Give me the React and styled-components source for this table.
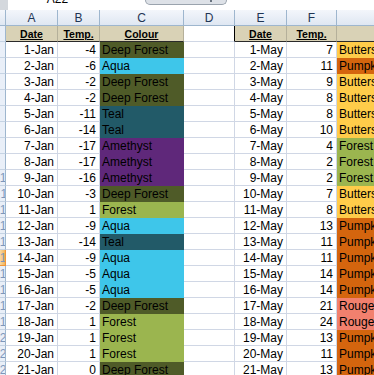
import React from "react";
import styled, { createGlobalStyle } from "styled-components";

const Global = createGlobalStyle`
  html, body { margin: 0; padding: 0; background: #fff; overflow: hidden; }
  body { width: 374px; height: 375px; font-family: "Liberation Sans", Arial, sans-serif; }
`;

const COLORS = {
  "Deep Forest": "#4f5b28",
  Aqua: "#3ec6ea",
  Teal: "#225a68",
  Amethyst: "#5f287a",
  Forest: "#9bb54f",
  Butterscotch: "#ffcc4a",
  Pumpkin: "#d4650e",
  Rouge: "#f2806e",
};

const jan = [
  [-4, "Deep Forest"], [-6, "Aqua"], [-2, "Deep Forest"], [-2, "Deep Forest"],
  [-11, "Teal"], [-14, "Teal"], [-17, "Amethyst"], [-17, "Amethyst"],
  [-16, "Amethyst"], [-3, "Deep Forest"], [1, "Forest"], [-9, "Aqua"],
  [-14, "Teal"], [-9, "Aqua"], [-5, "Aqua"], [-5, "Aqua"], [-2, "Deep Forest"],
  [1, "Forest"], [1, "Forest"], [1, "Forest"], [0, "Deep Forest"],
];
const may = [
  [7, "Butterscotch"], [11, "Pumpkin"], [9, "Butterscotch"], [8, "Butterscotch"],
  [8, "Butterscotch"], [10, "Butterscotch"], [4, "Forest"], [2, "Forest"],
  [2, "Forest"], [7, "Butterscotch"], [8, "Butterscotch"], [13, "Pumpkin"],
  [11, "Pumpkin"], [11, "Pumpkin"], [14, "Pumpkin"], [14, "Pumpkin"],
  [21, "Rouge"], [24, "Rouge"], [13, "Pumpkin"], [11, "Pumpkin"], [13, "Pumpkin"],
];

const Page = styled.div`
  width: 374px;
  height: 375px;
  overflow: hidden;
  display: flex;
  flex-direction: column;
`;

const FormulaStrip = styled.div`
  height: 10px;
  flex: none;
  display: flex;
  align-items: flex-start;
  background: #fff;
  overflow: hidden;
`;

const Corner = styled.div`
  width: 8px;
  height: 10px;
  background: #d4d8dd;
`;

const NameBox = styled.div`
  width: 137px;
  height: 10px;
  display: flex;
  align-items: flex-end;
  justify-content: center;
  overflow: hidden;
  span {
    font-size: 12px;
    line-height: 14px;
    margin-bottom: 4px;
    color: #000;
    padding-right: 38px;
  }
`;

const Expander = styled.div`
  width: 82px;
  height: 5px;
  background: #dde1e7;
  border: 1px solid #9aa3ad;
  border-top: none;
  border-radius: 0 0 9px 9px;
  display: flex;
  justify-content: flex-end;
  align-items: flex-start;
  padding-right: 14px;
  box-sizing: border-box;
  &::after {
    content: "";
    width: 2px;
    height: 2px;
    background: #6a7480;
  }
`;

const Grid = styled.div`
  display: grid;
  grid-template-columns: 6px 52px 42px 84px 51px 52px 50px 116px;
  grid-auto-rows: 16px;
  width: 453px;
`;

const ColHead = styled.div`
  box-sizing: border-box;
  background: linear-gradient(#f3f6fb, #dfe7f2);
  border-right: 1px solid #9eb6ce;
  border-bottom: 1px solid #9eb6ce;
  color: #1f3555;
  font-size: 12px;
  display: flex;
  align-items: center;
  justify-content: center;
  line-height: 1;
`;

const RowHead = styled.div`
  box-sizing: border-box;
  background: ${(p) => (p.$active ? "linear-gradient(90deg,#f9d99f,#f1b45c)" : "#e9eff8")};
  border-right: 1px solid ${(p) => (p.$active ? "#f29536" : "#9eb6ce")};
  border-bottom: 1px solid ${(p) => (p.$active ? "#f29536" : "#c5d3e3")};
  overflow: hidden;
  display: flex;
  justify-content: flex-end;
  align-items: center;
  font-size: 12px;
  color: #7d97bb;
  span { margin-right: -8px; }
`;

const Head = styled.div`
  box-sizing: border-box;
  background: ${(p) => (p.$blank ? "#fff" : "#d9d2b6")};
  border-right: 1px solid ${(p) => (p.$blank ? "#000" : "#b5b09a")};
  border-bottom: 1px solid ${(p) => (p.$blank ? "#d0d7e5" : "#2a2a2a")};
  font-size: 10.5px;
  font-weight: bold;
  text-decoration: underline;
  color: #000;
  display: flex;
  align-items: center;
  justify-content: center;
  white-space: nowrap;
  overflow: hidden;
`;

const Cell = styled.div`
  box-sizing: border-box;
  background: ${(p) => p.$bg || "#fff"};
  border-right: 1px solid ${(p) => p.$bg || "#d0d7e5"};
  border-bottom: 1px solid ${(p) => p.$bg || "#d0d7e5"};
  font-size: 12px;
  color: #000;
  display: flex;
  align-items: center;
  justify-content: ${(p) => (p.$left ? "flex-start" : "flex-end")};
  padding: ${(p) => (p.$left ? "0 0 0 2px" : "0 3px 0 0")};
  white-space: nowrap;
  overflow: hidden;
`;

export default function App() {
  const letters = ["", "A", "B", "C", "D", "E", "F", "G"];
  return (
    <Page>
      <Global />
      <FormulaStrip>
        <Corner />
        <NameBox>
          <span>A22</span>
        </NameBox>
        <Expander />
      </FormulaStrip>
      <Grid>
        {letters.map((l, i) =>
          i === 0 ? <ColHead key="c0" /> : <ColHead key={l}>{l}</ColHead>
        )}
        <RowHead>
          <span>1</span>
        </RowHead>
        <Head>Date</Head>
        <Head>Temp.</Head>
        <Head>Colour</Head>
        <Head $blank />
        <Head>Date</Head>
        <Head>Temp.</Head>
        <Head>Colour</Head>
        {jan.map((r, i) => {
          const m = may[i];
          return (
            <React.Fragment key={i}>
              <RowHead $active={i === 13}>
                <span>{i + 2}</span>
              </RowHead>
              <Cell>{i + 1}-Jan</Cell>
              <Cell>{r[0]}</Cell>
              <Cell $left $bg={COLORS[r[1]]}>{r[1]}</Cell>
              <Cell />
              <Cell>{i + 1}-May</Cell>
              <Cell>{m[0]}</Cell>
              <Cell $left $bg={COLORS[m[1]]}>{m[1]}</Cell>
            </React.Fragment>
          );
        })}
      </Grid>
    </Page>
  );
}
